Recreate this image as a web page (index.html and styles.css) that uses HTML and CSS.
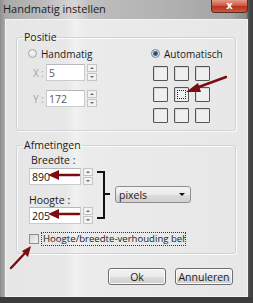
FILE: index.html
```html
<!DOCTYPE html>
<html>
<head>
<meta charset="utf-8">
<link rel="stylesheet" href="styles.css">
</head>
<body>
<div class="window">
  <div class="titlebar">
    <span class="title">Handmatig instellen</span>
    <span class="close">x</span>
  </div>
  <div class="client">
    <fieldset class="group pos">
      <legend>Positie</legend>
      <div class="pos-body">
        <div class="col-left">
          <div class="radio-row"><span class="radio"></span><span>Handmatig</span></div>
          <div class="coord-row"><span class="coord-lbl">X :</span><span class="input dis"><span class="val">5</span></span><span class="spin"><i class="up"></i><i class="dn"></i></span></div>
          <div class="coord-row r2"><span class="coord-lbl">Y :</span><span class="input dis"><span class="val">172</span></span><span class="spin"><i class="up"></i><i class="dn"></i></span></div>
        </div>
        <div class="col-right">
          <div class="radio-row"><span class="radio on"></span><span>Automatisch</span></div>
          <div class="grid">
            <span class="cell"></span><span class="cell"></span><span class="cell"></span>
            <span class="cell"></span><span class="cell focus"></span><span class="cell"></span>
            <span class="cell"></span><span class="cell"></span><span class="cell"></span>
          </div>
        </div>
      </div>
    </fieldset>
    <fieldset class="group size">
      <legend>Afmetingen</legend>
      <div class="size-body">
        <div class="size-fields">
          <div class="fields-col">
            <div class="lbl lb1">Breedte :</div>
            <div class="field-row"><span class="input wide"><span class="val">890</span></span><span class="spin"><i class="up"></i><i class="dn"></i></span></div>
            <div class="lbl lb2">Hoogte :</div>
            <div class="field-row"><span class="input wide"><span class="val">205</span></span><span class="spin"><i class="up"></i><i class="dn"></i></span></div>
          </div>
          <div class="bracket"></div>
          <div class="select"><span>pixels</span><span class="caret"></span></div>
        </div>
        <div class="check-row"><span class="checkbox"></span><span class="check-lbl">Hoogte/breedte-verhouding behouden</span></div>
      </div>
    </fieldset>
    <div class="buttons">
      <span class="btn">Ok</span>
      <span class="btn">Annuleren</span>
    </div>
  </div>
  <svg class="arrows" width="253" height="303" viewBox="0 0 253 303">
    <g stroke="#7a0d10" stroke-width="2.4" fill="#7a0d10" stroke-linecap="round">
      <line x1="226" y1="77" x2="196" y2="88"/>
      <polygon stroke="none" points="186,92 198,83 201,92"/>
      <line x1="79" y1="175" x2="58" y2="175"/>
      <polygon stroke="none" points="48,175 59,170 59,180"/>
      <line x1="79" y1="214" x2="58" y2="214"/>
      <polygon stroke="none" points="48,214 59,209 59,219"/>
      <line x1="11" y1="268" x2="26" y2="252"/>
      <polygon stroke="none" points="31,246 22,251 28,257"/>
    </g>
  </svg>
</div>
</body>
</html>
```

FILE: styles.css
```css
html, body {
  margin: 0;
  padding: 0;
  background: #2a2a2a;
}
body {
  width: 253px;
  height: 303px;
  overflow: hidden;
  font-family: "Open Sans", "Noto Sans", sans-serif;
  font-size: 10px;
  color: #1b1b1b;
}
.window {
  position: relative;
  width: 253px;
  height: 303px;
  box-sizing: border-box;
  display: flex;
  flex-direction: column;
  background: linear-gradient(90deg, #8e8e8e 0, #a9a9a9 5px, #b9b9b9 40px, #d6d6d6 75px, #bdbdbd 90px, #b3b3b3 160px, #a4a4a4 230px, #8a8a8a 246px, #4a4a4a 249px, #3d3d3d 253px);
  border-bottom: 6px solid #3b3b3b;
}
.titlebar {
  height: 19px;
  display: flex;
  align-items: flex-start;
  justify-content: space-between;
  flex-shrink: 0;
}
.title {
  font-size: 11px;
  line-height: 14px;
  margin: 2px 0 0 3px;
  color: #1a1a1a;
}
.close {
  width: 37px;
  height: 13px;
  margin-right: 5px;
  box-sizing: border-box;
  border: 1px solid #5c2a22;
  border-top: none;
  border-radius: 0 0 4px 4px;
  background: linear-gradient(180deg, #e39a8b 0, #d05a45 45%, #b8321f 55%, #c85a3e 100%);
  color: #fff;
  font-family: "DejaVu Sans", sans-serif;
  font-weight: bold;
  font-size: 10px;
  line-height: 11px;
  text-align: center;
}
.client {
  flex: 1;
  margin: 0 5px 0 5px;
  background: linear-gradient(90deg, #e6e6e6 0, #e8e8e8 60px, #f1f1f1 70px, #ebebeb 80px, #e7e7e7 100%);
  border: 1px solid #f4f4f4;
  box-sizing: border-box;
  padding: 10px 11px 0 10px;
  display: flex;
  flex-direction: column;
}
.group {
  margin: 0;
  padding: 0;
  border: 1px solid #cfd3d6;
  border-radius: 3px;
  box-shadow: inset 1px 1px 0 #fafafa, 1px 1px 0 #fafafa;
}
.group legend {
  padding: 0 1px;
  margin-left: 6px;
  line-height: 15px;
  font-size: 10.5px;
}
.pos {
  height: 101px;
  box-sizing: border-box;
}
.pos-body {
  display: flex;
  padding: 1px 0 0 11px;
}
.col-left {
  width: 123px;
}
.radio-row {
  display: flex;
  align-items: center;
  height: 15px;
  gap: 4px;
}
.radio {
  width: 9px;
  height: 9px;
  box-sizing: border-box;
  border-radius: 50%;
  border: 1px solid #a9a9a9;
  background: radial-gradient(circle at 40% 40%, #f8f8f8, #d9d9d9);
}
.radio.on {
  border-color: #7b8790;
  background: radial-gradient(circle, #233d59 0, #3b6a92 2px, #dfe6ea 3px, #eaeaea 4px);
}
.coord-row {
  display: flex;
  align-items: center;
  margin-top: 3px;
  height: 17px;
}
.coord-row.r2 {
  margin-top: 9px;
}
.coord-lbl {
  width: 13px;
  margin-left: 5px;
  color: #a4a4a4;
}
.input {
  width: 39px;
  height: 17px;
  box-sizing: border-box;
  border: 1px solid #c9cbcd;
  border-top-color: #b5b8bb;
  background: #fff;
  display: flex;
  align-items: center;
  padding-left: 2px;
}
.input.dis .val {
  color: #5a5a5a;
}
.input.wide {
  width: 52px;
}
.val {
  font-size: 10.5px;
  color: #111;
}
.spin {
  width: 10px;
  height: 17px;
  margin-left: 2px;
  display: flex;
  flex-direction: column;
  gap: 1px;
}
.spin i {
  flex: 1;
  box-sizing: border-box;
  border: 1px solid #c3c6c9;
  background: #f2f2f2;
  position: relative;
}
.spin i::after {
  content: "";
  position: absolute;
  left: 2px;
  top: 2px;
  border-left: 2px solid transparent;
  border-right: 2px solid transparent;
}
.spin .up::after {
  border-bottom: 2px solid #6b6b6b;
}
.spin .dn::after {
  border-top: 2px solid #6b6b6b;
}
.grid {
  margin-top: 5px;
  margin-left: 2px;
  display: grid;
  grid-template-columns: repeat(3, 15px);
  grid-auto-rows: 15px;
  gap: 6px;
}
.cell {
  border: 1px solid #555;
  border-radius: 1px;
  background: #efefef;
  box-shadow: inset 1px 1px 0 #d8d8d8;
  position: relative;
}
.cell.focus::after {
  content: "";
  position: absolute;
  inset: 2px;
  border: 1px dotted #222;
}
.size {
  margin-top: 7px;
  height: 116px;
  box-sizing: border-box;
}
.size-body {
  padding: 0 0 0 12px;
}
.size-fields {
  display: flex;
  align-items: center;
}
.lbl {
  line-height: 14px;
  font-size: 10.5px;
}
.lb1 {
  margin-left: 2px;
  margin-bottom: 1px;
}
.lb2 {
  margin-top: 8px;
}
.field-row {
  display: flex;
  align-items: center;
}
.bracket {
  width: 6px;
  height: 44px;
  margin: 12px 0 0 4px;
  border: 2px solid #111;
  border-left: none;
  position: relative;
}
.bracket::after {
  content: "";
  position: absolute;
  right: -7px;
  top: 20px;
  width: 5px;
  border-top: 2px solid #111;
}
.select {
  width: 76px;
  height: 17px;
  margin: 12px 0 0 10px;
  box-sizing: border-box;
  border: 1px solid #8e8e8e;
  border-radius: 3px;
  background: linear-gradient(180deg, #f3f3f3 0, #ebebeb 50%, #dddddd 51%, #d0d0d0 100%);
  display: flex;
  align-items: center;
  justify-content: space-between;
  padding: 0 5px 0 3px;
  font-size: 10.5px;
}
.caret {
  border-left: 3px solid transparent;
  border-right: 3px solid transparent;
  border-top: 3px solid #111;
}
.check-row {
  display: flex;
  align-items: center;
  margin-top: 8px;
  height: 14px;
}
.checkbox {
  width: 10px;
  height: 10px;
  box-sizing: border-box;
  border: 1px solid #8f8f8f;
  background: linear-gradient(135deg, #d6d6d6, #f4f4f4);
  margin-right: 2px;
}
.check-lbl {
  width: 142px;
  overflow: hidden;
  white-space: nowrap;
  border: 1px dotted #333;
  line-height: 12px;
  padding-left: 1px;
  font-size: 9.6px;
}
.buttons {
  display: flex;
  justify-content: flex-end;
  gap: 9px;
  margin-top: 14px;
  padding-right: 3px;
}
.btn {
  width: 58px;
  height: 17px;
  box-sizing: border-box;
  border: 1px solid #707070;
  border-radius: 3px;
  background: linear-gradient(180deg, #f2f2f2 0, #ebebeb 50%, #dddddd 51%, #cfcfcf 100%);
  box-shadow: inset 0 0 0 1px #fafafa;
  display: flex;
  align-items: center;
  justify-content: center;
  font-size: 10.5px;
}
.arrows {
  position: absolute;
  left: 0;
  top: 0;
  pointer-events: none;
}
```
